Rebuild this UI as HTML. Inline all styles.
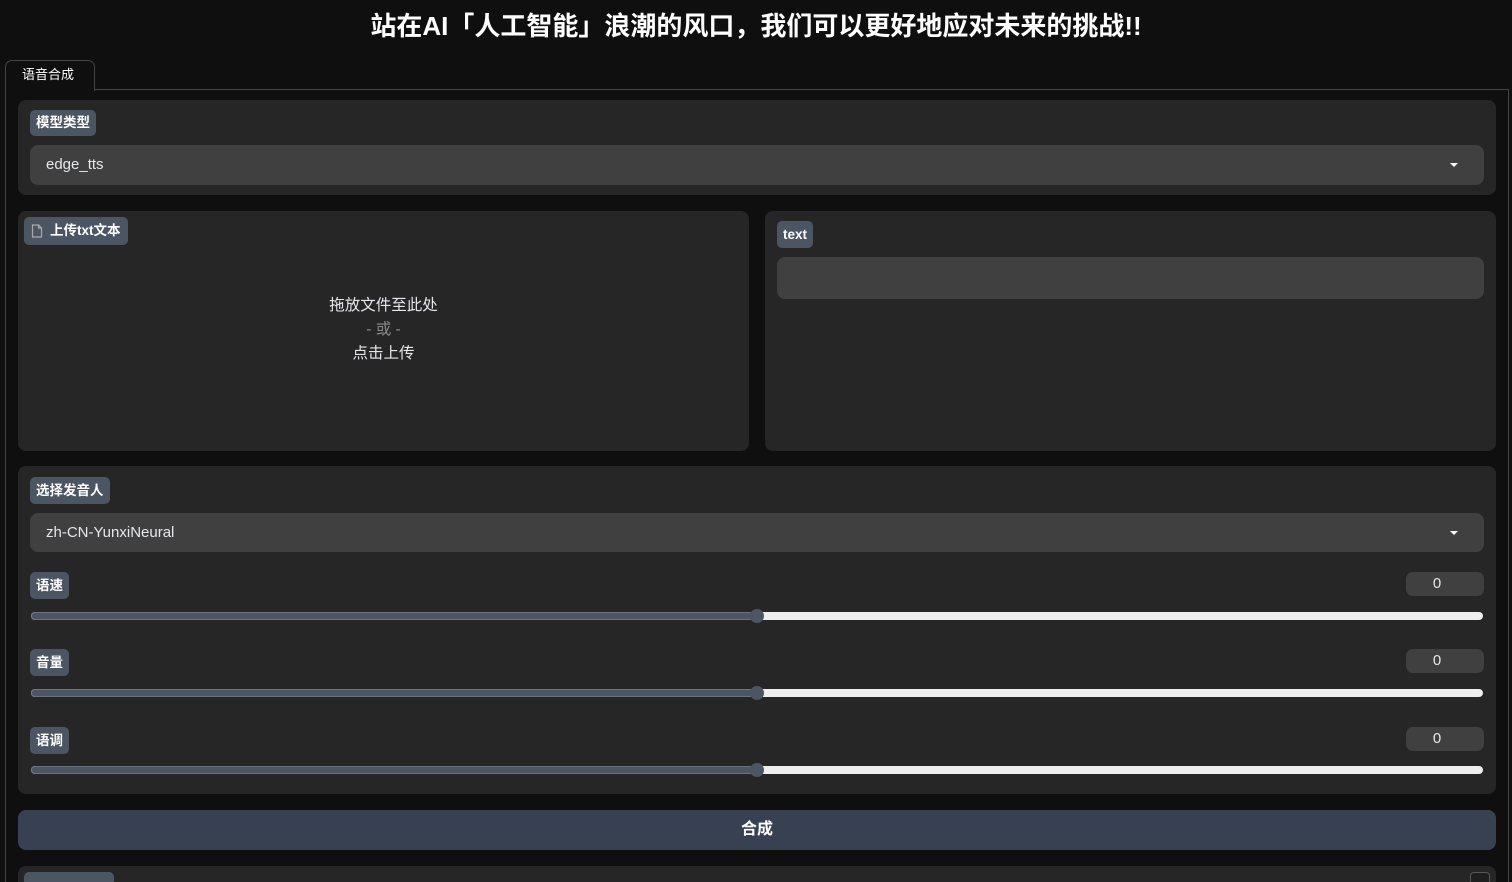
<!DOCTYPE html>
<html style="width:1512px;height:882px;overflow:hidden"><head><meta charset="utf-8"><style>
*{box-sizing:border-box;margin:0;padding:0}
body{width:1512px;height:882px;background:#0f0f0f;overflow:hidden;position:relative;font-family:"Liberation Sans","Noto Sans CJK SC",sans-serif;color:#f3f4f6}
.a{position:absolute}
.p{position:absolute;background:#262626;border-radius:8px}
.lb{position:absolute;background:#4b5563;border-radius:5px;color:#fff;font-weight:bold;font-size:13.5px;line-height:26px;padding:0 6px;white-space:nowrap}
.in{position:absolute;background:#404040;border-radius:8px;font-size:15px;color:#e5e7eb;padding-left:16px}
.arr{position:absolute;right:26px;top:50%;margin-top:-2px;width:0;height:0;border-left:4px solid transparent;border-right:4px solid transparent;border-top:4px solid #fff}
.num{position:absolute;left:1406px;width:78px;height:24px;background:#404040;border-radius:7px;text-align:center;font-size:15px;line-height:24px;color:#e5e7eb;padding-right:16px}
.tr{position:absolute;left:31px;width:1452px;height:8px;border-radius:4px;background:#eeeeee}
.tr .f{position:absolute;left:0;top:0;height:8px;width:727px;background:#4b5563;border-radius:4px 0 0 4px;border:1px solid #6b7280}
.tr .t{position:absolute;left:719px;top:-3px;width:14px;height:14px;border-radius:50%;background:#4b5563}
</style></head><body>
<div class="a" style="top:8px;left:0;width:1512px;text-align:center;font-size:26px;font-weight:bold;color:#fff;line-height:36px">站在AI「人工智能」浪潮的风口，我们可以更好地应对未来的挑战!!</div>
<div class="a" style="left:5px;top:60px;width:90px;height:31px;border:1px solid #444;border-bottom:none;border-radius:7px 7px 0 0;background:#0f0f0f;z-index:2;font-size:13px;line-height:28px;padding-left:16px;color:#fff">语音合成</div>
<div class="a" style="left:5px;top:89px;width:1504px;height:800px;border:1px solid #444"></div>

<div class="p" style="left:18px;top:100px;width:1478px;height:95px"></div>
<div class="lb" style="left:30px;top:110px">模型类型</div>
<div class="in" style="left:30px;top:145px;width:1454px;height:40px;line-height:40px">edge_tts<div class="arr"></div></div>

<div class="p" style="left:18px;top:211px;width:731px;height:240px"></div>
<div class="lb" style="left:24px;top:217px;height:28px;line-height:28px;padding-left:26px;padding-right:7px"><svg class="a" style="left:7px;top:7px" width="12" height="14" viewBox="0 0 12 14" fill="none" stroke="#aaa" stroke-width="1.2"><path d="M1.5 1h6l3 3v9h-9z M7.5 1v3h3"/></svg>上传txt文本</div>
<div class="a" style="left:18px;top:294px;width:731px;text-align:center;font-size:15.5px;line-height:24px;color:#e5e7eb">拖放文件至此处<br><span style="color:#8a8a8a">- 或 -</span><br>点击上传</div>

<div class="p" style="left:765px;top:211px;width:731px;height:240px"></div>
<div class="lb" style="left:777px;top:221px;height:27px;line-height:27px">text</div>
<div class="in" style="left:777px;top:257px;width:707px;height:42px"></div>

<div class="p" style="left:18px;top:466px;width:1478px;height:328px"></div>
<div class="lb" style="left:30px;top:477px;height:27px;line-height:27px">选择发音人</div>
<div class="in" style="left:30px;top:513px;width:1454px;height:39px;line-height:39px">zh-CN-YunxiNeural<div class="arr"></div></div>

<div class="lb" style="left:30px;top:572px;height:27px;line-height:27px">语速</div>
<div class="num" style="top:572px">0</div>
<div class="tr" style="top:612px"><div class="f"></div><div class="t"></div></div>
<div class="lb" style="left:30px;top:649px;height:27px;line-height:27px">音量</div>
<div class="num" style="top:649px">0</div>
<div class="tr" style="top:689px"><div class="f"></div><div class="t"></div></div>
<div class="lb" style="left:30px;top:727px;height:27px;line-height:27px">语调</div>
<div class="num" style="top:727px">0</div>
<div class="tr" style="top:766px"><div class="f"></div><div class="t"></div></div>

<div class="a" style="left:18px;top:810px;width:1478px;height:40px;background:#374151;border-radius:8px;text-align:center;line-height:40px;font-size:16px;font-weight:bold;color:#fff">合成</div>

<div class="p" style="left:18px;top:866px;width:1478px;height:16px;border-radius:8px 8px 0 0"></div>
<div class="lb" style="left:24px;top:872px;width:90px;height:10px;border-radius:5px 5px 0 0"></div>
<div class="a" style="left:1470px;top:872px;width:20px;height:10px;border:1px solid #555;border-bottom:none;border-radius:4px 4px 0 0;background:#1f1f1f"></div>
</body></html>
